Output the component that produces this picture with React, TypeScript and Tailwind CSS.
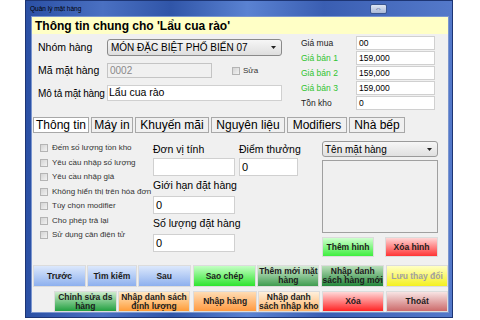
import React from 'react';

const checks = [
  'Đếm số lượng tồn kho',
  'Yêu cầu nhập số lượng',
  'Yêu cầu nhập giá',
  'Không hiển thị trên hóa đơn',
  'Tùy chọn modifier',
  'Cho phép trả lại',
  'Sử dụng cân điện tử',
];

const prices = [
  { label: 'Giá mua', value: '00', green: false },
  { label: 'Giá bán 1', value: '159,000', green: true },
  { label: 'Giá bán 2', value: '159,000', green: true },
  { label: 'Giá bán 3', value: '159,000', green: true },
  { label: 'Tồn kho', value: '0', green: false },
];

const tabs = [
  { name: 'Thông tin', w: 'w-[56px]', active: true },
  { name: 'Máy in', w: 'w-[42px]', active: false },
  { name: 'Khuyến mãi', w: 'w-[74px]', active: false },
  { name: 'Nguyên liệu', w: 'w-[74px]', active: false },
  { name: 'Modifiers', w: 'w-[60px]', active: false },
  { name: 'Nhà bếp', w: 'w-[56px]', active: false },
];

const row1 = [
  { t: ['Trước'], cls: 'w-[53px] bg-[linear-gradient(#dce8fc,#8db0ee)]' },
  { t: ['Tìm kiếm'], cls: 'w-[50px] ml-[1px] bg-[linear-gradient(#dce8fc,#8db0ee)]' },
  { t: ['Sau'], cls: 'w-[53px] ml-[1px] bg-[linear-gradient(#dce8fc,#8db0ee)]' },
  { t: ['Sao chép'], cls: 'w-[64px] ml-[2px] bg-[linear-gradient(#c4ffc4,#2ee42e)]' },
  { t: ['Thêm mới mặt', 'hàng'], cls: 'w-[62px] ml-[1px] bg-[linear-gradient(#d4ecd4,#3f9c4f)]' },
  { t: ['Nhập danh', 'sách hàng mới'], cls: 'w-[63px] ml-[2px] bg-[linear-gradient(#b9e0b9,#23863a)]' },
  { t: ['Lưu thay đổi'], cls: 'w-[62px] ml-[2px] bg-[linear-gradient(#ffffc4,#f4f020)] text-[#a0a0a0]' },
];

const row2 = [
  { t: ['Chỉnh sửa ds', 'hàng'], cls: 'w-[63px] ml-[22px] bg-[linear-gradient(#cdeccd,#22a040)]' },
  { t: ['Nhập danh sách', 'định lượng'], cls: 'w-[73px] ml-[1px] bg-[linear-gradient(#ffe8c4,#ff9c38)]' },
  { t: ['Nhập hàng'], cls: 'w-[64px] ml-[3px] bg-[linear-gradient(#ffdcb4,#ff9a40)]' },
  { t: ['Nhập danh', 'sách nhập kho'], cls: 'w-[62px] ml-[1px] bg-[linear-gradient(#fff0dc,#ffb468)]' },
  { t: ['Xóa'], cls: 'w-[63px] ml-[2px] bg-[linear-gradient(#ffd8d8,#ff2424)]' },
  { t: ['Thoát'], cls: 'w-[62px] ml-[2px] bg-[linear-gradient(#f8e4e4,#cc6a6a)]' },
];

const Check = ({ label }: { label: string }) => (
  <div className="flex items-center h-[14.5px]">
    <span className="w-[8px] h-[8px] border border-[#b4b4b4] bg-[linear-gradient(135deg,#d4d4d4,#f2f2f2)]" />
    <span className="ml-[4px] text-[8px] text-[#333]">{label}</span>
  </div>
);

const Arrow = () => (
  <svg width="5" height="3" viewBox="0 0 5 3" className="shrink-0">
    <path d="M0 0h5L2.5 3z" fill="#222" />
  </svg>
);

const Btn = ({ t, cls }: { t: string[]; cls: string }) => (
  <div
    className={`h-full flex flex-col items-center justify-center border border-[#dcdcdc] text-[8.5px] font-bold leading-[9px] text-center text-[#1c1c1c] ${cls}`}
  >
    {t.map((line) => (
      <span key={line}>{line}</span>
    ))}
  </div>
);

export default function App() {
  return (
    <div className="w-[480px] h-[320px] bg-white overflow-hidden font-['Liberation_Sans',Arial,sans-serif] text-black">
      <div className="ml-[25px] w-[428px] h-[318px] flex flex-col border border-[#1d3574] bg-[linear-gradient(90deg,#2b50a4_0%,#4a70c2_18%,#3055a8_34%,#5a82d2_52%,#3a5eb2_70%,#5479ca_100%)]">
        <div className="h-[15px] flex items-center justify-between pl-[4px]">
          <span className="text-[6.5px] text-black">Quản lý mặt hàng</span>
          <div className="mr-[65px] w-[17px] h-[10px] rounded-[2px] border border-[#3a5690] bg-[linear-gradient(#dfe6f4,#a9b8d8)] flex items-center justify-center text-[7px] leading-none text-[#2b3f70]">
            ⇔
          </div>
        </div>
        <div className="flex-1 ml-[5px] mr-[3px] mb-[4px] bg-[#f0f0f0] border border-[#7b96cf] flex flex-col">
          <div className="h-[17px] bg-[#ffffc6] flex items-center pl-[3px] text-[12px] font-bold">
            Thông tin chung cho 'Lẩu cua rào'
          </div>

          <div className="flex items-start">
            <div className="ml-[6px] mt-[5px] w-[245px] text-[10px]">
              <div className="flex items-center h-[17px]">
                <span className="w-[69px] text-[10.5px]">Nhóm hàng</span>
                <div className="w-[175px] h-[17px] rounded-[3px] border border-[#8a8a8a] bg-[linear-gradient(#f6f6f6,#dedede)] flex items-center justify-between pl-[3px] pr-[5px] text-[10px]">
                  <span>MÓN ĐẶC BIỆT PHỐ BIẾN 07</span>
                  <Arrow />
                </div>
              </div>
              <div className="flex items-center h-[15px] mt-[7px]">
                <span className="w-[69px] text-[10.5px]">Mã mặt hàng</span>
                <div className="w-[105px] h-[15px] border border-[#c4c4c4] bg-[#f0f0f0] flex items-center pl-[2px] text-[10px] text-[#8a8a8a]">
                  0002
                </div>
                <span className="ml-[20px] w-[8px] h-[8px] border border-[#b4b4b4] bg-[linear-gradient(135deg,#d4d4d4,#f2f2f2)]" />
                <span className="ml-[3px] text-[8px] text-[#333]">Sửa</span>
              </div>
              <div className="flex items-center h-[16px] mt-[7px]">
                <span className="w-[69px] whitespace-nowrap tracking-[-0.2px]">Mô tả mặt hàng</span>
                <div className="w-[175px] h-[16px] border border-[#d0d0d0] bg-white flex items-center pl-[1px] text-[10.5px]">
                  Lẩu cua rào
                </div>
              </div>
            </div>

            <div className="ml-[18px] mt-[2px] flex flex-col gap-[1px] text-[8.5px]">
              {prices.map((p) => (
                <div key={p.label} className="flex items-center h-[14px]">
                  <span className={`w-[55px] ${p.green ? 'text-[#2fc42f]' : 'text-[#222]'}`}>{p.label}</span>
                  <div className="w-[79px] h-[14px] border border-[#d0d0d0] bg-white flex items-center pl-[2px]">
                    {p.value}
                  </div>
                </div>
              ))}
            </div>
          </div>

          <div className="flex gap-[2px] ml-[1px] mt-[7px]">
            {tabs.map((t) => (
              <div
                key={t.name}
                className={`${t.w} h-[16px] border border-[#a8a8a8] flex items-center justify-center text-[12px] ${
                  t.active ? 'bg-white' : 'bg-[#f0f0f0]'
                }`}
              >
                {t.name}
              </div>
            ))}
          </div>

          <div className="flex items-start mt-[8px]">
            <div className="ml-[8px] w-[113px] flex flex-col">
              {checks.map((c) => (
                <Check key={c} label={c} />
              ))}
            </div>

            <div className="w-[86px] flex flex-col text-[10.5px]">
              <div className="h-[17px] flex items-center">Đơn vị tính</div>
              <div className="w-[82px] h-[18px] border border-[#d0d0d0] bg-white" />
              <div className="h-[20px] flex items-center">Giới hạn đặt hàng</div>
              <div className="w-[82px] h-[18px] border border-[#d0d0d0] bg-white flex items-center pl-[2px] text-[11px]">0</div>
              <div className="h-[20px] flex items-center whitespace-nowrap">Số lượng đặt hàng</div>
              <div className="w-[82px] h-[18px] border border-[#d0d0d0] bg-white flex items-center pl-[2px] text-[11px]">0</div>
            </div>

            <div className="w-[83px] flex flex-col text-[10.5px]">
              <div className="h-[17px] flex items-center">Điểm thưởng</div>
              <div className="w-[59px] h-[18px] border border-[#d0d0d0] bg-white flex items-center pl-[2px] text-[11px]">0</div>
            </div>

            <div className="w-[116px] flex flex-col">
              <div className="h-[16px] rounded-[3px] border border-[#9a9a9a] bg-[linear-gradient(#f6f6f6,#e0e0e0)] flex items-center justify-between pl-[2px] pr-[5px] text-[10px]">
                <span>Tên mặt hàng</span>
                <Arrow />
              </div>
              <div className="mt-[3px] h-[73px] border border-[#a0a0a0] bg-[#f0f0f0]" />
              <div className="mt-[4px] h-[20px] flex justify-between">
                <div className="w-[52px] h-full border border-[#dcdcdc] bg-[linear-gradient(#cfffcf,#3eee3e)] flex items-center justify-center text-[8.5px] font-bold text-[#1c1c1c]">
                  Thêm hình
                </div>
                <div className="w-[53px] h-full border border-[#dcdcdc] bg-[linear-gradient(#ffd6d6,#ff3434)] flex items-center justify-center text-[8.5px] font-bold text-[#1c1c1c]">
                  Xóa hình
                </div>
              </div>
            </div>
          </div>

          <div className="mt-auto flex flex-col gap-[4px]">
            <div className="flex h-[22px] ml-[1px]">
              {row1.map((b) => (
                <Btn key={b.t.join()} t={b.t} cls={b.cls} />
              ))}
            </div>
            <div className="flex h-[21px]">
              {row2.map((b) => (
                <Btn key={b.t.join()} t={b.t} cls={b.cls} />
              ))}
            </div>
          </div>
        </div>
      </div>
    </div>
  );
}
